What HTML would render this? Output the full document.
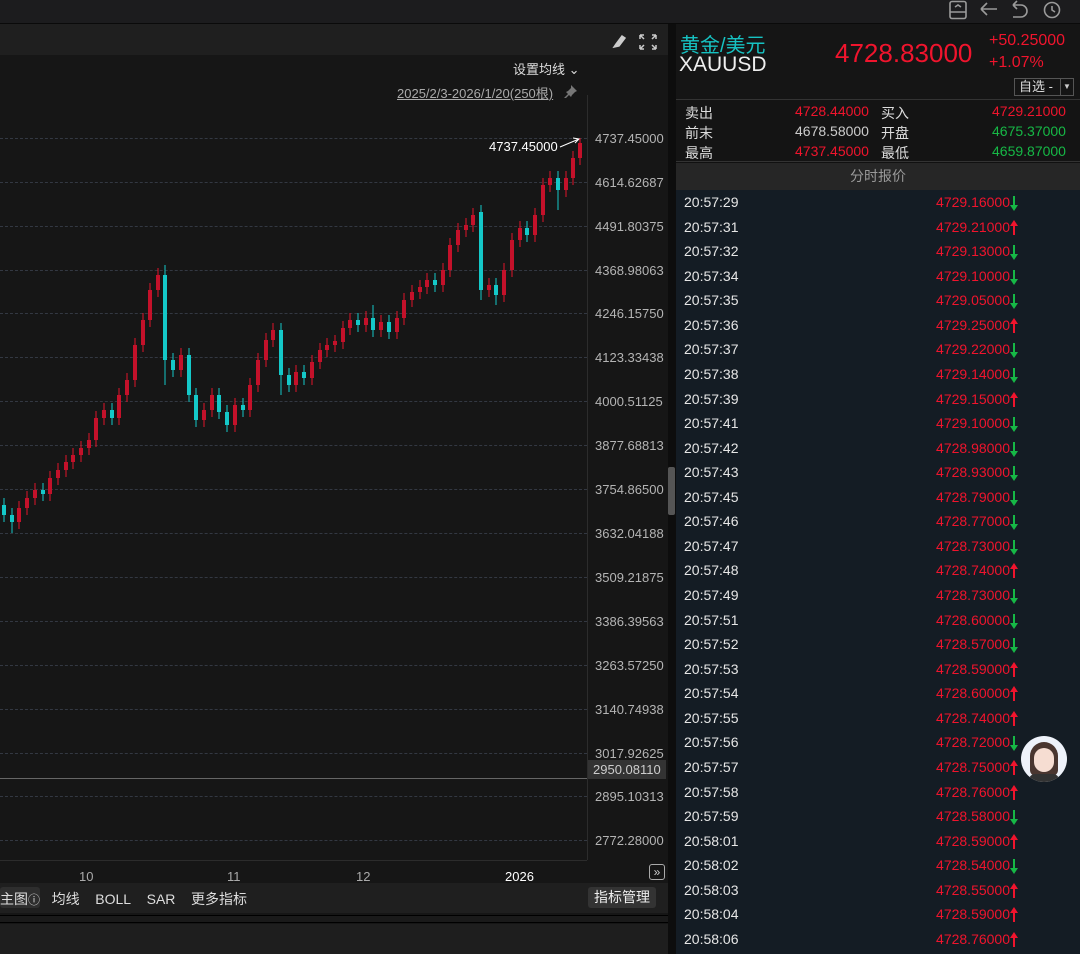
<!DOCTYPE html>
<html><head><meta charset="utf-8">
<style>
*{margin:0;padding:0;box-sizing:border-box}
body{width:1080px;height:954px;background:#161616;font-family:"Liberation Sans","Noto Sans CJK SC",sans-serif;position:relative;overflow:hidden;color:#ddd}
.abs{position:absolute}
.topbar{left:0;top:0;width:1080px;height:24px;background:#1c1c1e;border-bottom:1px solid #0a0a0a}
.chdr{left:0;top:24px;width:668px;height:31px;background:#1f1f1f}
.ylab{left:595px;font-size:13px;color:#b4b4b4}
.grid{left:0;width:587px;height:0;border-top:1px dashed #333842}
.xl{top:869px;font-size:13px;color:#aaa}
.right{left:676px;top:24px;width:404px;height:930px;background:#111}
#rows{position:absolute;left:676px;top:190px;width:404px}
.row{position:relative;width:404px;height:24.57px;font-size:14px}
.row .t{position:absolute;left:8px;top:4px;color:#e6e6e6}
.row .p{position:absolute;right:70px;top:4px;color:#f0142d}
.row i{position:absolute;left:334px;top:5px;width:8px;height:16px}
.u{background:linear-gradient(#f0142d,#f0142d) 3px 5px/2px 10px no-repeat}
.u:before{content:"";position:absolute;left:0;top:0;border-left:4px solid transparent;border-right:4px solid transparent;border-bottom:6px solid #f0142d}
.d{background:linear-gradient(#16b846,#16b846) 3px 1px/2px 10px no-repeat}
.d:before{content:"";position:absolute;left:0;top:10px;border-left:4px solid transparent;border-right:4px solid transparent;border-top:6px solid #16b846}
.st{position:absolute;font-size:14px}
</style></head><body>
<div class="abs topbar"></div>
<svg class="abs" style="left:945px;top:0" width="135" height="22" viewBox="0 0 135 22" fill="none" stroke="#9a9a9a" stroke-width="1.6">
<rect x="5" y="1.5" width="16" height="17" rx="2"/><path d="M5 12h16M10 7l3-2 3 2"/>
<path d="M36 9h16M36 9l6-6M36 9l6 6"/>
<path d="M68 5h8a6 6 0 010 12h-8M68 5l4-4M68 5l4 4"/>
<circle cx="107" cy="10" r="7.5"/><path d="M107 6v4l3 2"/>
</svg>
<div class="abs chdr"></div>
<svg class="abs" style="left:612px;top:33px" width="48" height="18" fill="none" stroke="#ccc" stroke-width="1.5">
<path d="M2 14l5-1 6-8-3-2-6 8z" fill="#ccc"/>
<path d="M28 2h4M28 2v4M28 2l4 4M44 2h-4M44 2v4M44 2l-4 4M28 16h4M28 16v-4M28 16l4-4M44 16h-4M44 16v-4M44 16l-4-4"/>
</svg>
<div class="abs" style="left:513px;top:59px;font-size:13px;color:#ddd">设置均线 ⌄</div>
<div class="abs" style="left:397px;top:83px;font-size:13px;color:#aaa;text-decoration:underline">2025/2/3-2026/1/20(250根)</div>
<svg class="abs" style="left:562px;top:84px" width="16" height="14" fill="#777"><path d="M9 1l6 6-2 1-3 3-1 2-2-2-5 5-1-1 5-5-2-2 2-1 3-3z"/></svg>
<div class="abs" style="left:587px;top:95px;width:1px;height:765px;background:#2c2c2c"></div>
<div class="abs" style="left:0;top:860px;width:587px;height:1px;background:#2c2c2c"></div>
<div class="abs grid" style="top:138px"></div><div class="abs grid" style="top:182px"></div><div class="abs grid" style="top:226px"></div><div class="abs grid" style="top:270px"></div><div class="abs grid" style="top:313px"></div><div class="abs grid" style="top:357px"></div><div class="abs grid" style="top:401px"></div><div class="abs grid" style="top:445px"></div><div class="abs grid" style="top:489px"></div><div class="abs grid" style="top:533px"></div><div class="abs grid" style="top:577px"></div><div class="abs grid" style="top:621px"></div><div class="abs grid" style="top:665px"></div><div class="abs grid" style="top:709px"></div><div class="abs grid" style="top:753px"></div><div class="abs grid" style="top:796px"></div><div class="abs grid" style="top:840px"></div>
<div class="abs" style="left:0;top:778px;width:587px;height:1px;background:#666"></div>
<div class="abs ylab" style="top:131px">4737.45000</div>
<div class="abs ylab" style="top:175px">4614.62687</div>
<div class="abs ylab" style="top:219px">4491.80375</div>
<div class="abs ylab" style="top:263px">4368.98063</div>
<div class="abs ylab" style="top:306px">4246.15750</div>
<div class="abs ylab" style="top:350px">4123.33438</div>
<div class="abs ylab" style="top:394px">4000.51125</div>
<div class="abs ylab" style="top:438px">3877.68813</div>
<div class="abs ylab" style="top:482px">3754.86500</div>
<div class="abs ylab" style="top:526px">3632.04188</div>
<div class="abs ylab" style="top:570px">3509.21875</div>
<div class="abs ylab" style="top:614px">3386.39563</div>
<div class="abs ylab" style="top:658px">3263.57250</div>
<div class="abs ylab" style="top:702px">3140.74938</div>
<div class="abs ylab" style="top:746px">3017.92625</div>
<div class="abs" style="left:588px;top:760px;width:78px;height:19px;background:#333"></div>
<div class="abs ylab" style="left:593px;top:762px;color:#ccc">2950.08110</div>
<div class="abs ylab" style="top:789px">2895.10313</div>
<div class="abs ylab" style="top:833px">2772.28000</div>
<div class="abs" style="left:489px;top:139px;font-size:13px;color:#fff">4737.45000</div>
<svg class="abs" style="left:558px;top:135px" width="24" height="14" fill="none" stroke="#fff" stroke-width="1"><path d="M2 12L21 4M15 3l6 1-4 4"/></svg>
<svg class="abs" style="left:0;top:0" width="587" height="860" fill="none">
<path stroke="#e0142b" stroke-width="1" d="M19 501V529M27 491V515M35 483V505M50 471V501M58 463V485M66 455V477M73 448V469M81 441V462M89 433V455M96 411V447M104 403V425M119 388V425M127 373V402M135 338V387M143 313V352M150 283V327M158 268V297M181 348V377M204 403V427M212 388V417M235 398V432M250 378V417M258 353V392M266 333V367M273 323V347M296 365V392M312 355V385M320 343V369M327 338V357M335 335V352M343 321V349M350 313V335M366 311V332M381 315V337M397 311V339M404 293V325M412 285V307M420 280V299M427 273V294M443 263V292M450 238V277M458 223V252M466 218V237M473 208V232M489 278V297M504 263V302M512 233V277M520 221V247M535 208V242M543 178V222M550 171V192M566 171V197M573 151V185M580 138V165"/>
<path stroke="#c4112a" stroke-width="4" d="M19 508V522M27 498V508M35 490V498M50 478V494M58 470V478M66 462V470M73 455V462M81 448V455M89 440V448M96 418V440M104 410V418M119 395V418M127 380V395M135 345V380M143 320V345M150 290V320M158 275V290M181 355V370M204 410V420M212 395V410M235 405V425M250 385V410M258 360V385M266 340V360M273 330V340M296 372V385M312 362V378M320 350V362M327 345V350M335 341V345M343 328V342M350 320V328M366 318V325M381 322V330M397 318V332M404 300V318M412 292V300M420 287V292M427 280V287M443 270V285M450 245V270M458 230V245M466 225V230M473 215V225M489 285V290M504 270V295M512 240V270M520 228V240M535 215V235M543 185V215M550 178V185M566 178V190M573 158V178M580 143V158"/>
<path stroke="#14c8c8" stroke-width="1" d="M4 498V522M12 508V533M43 483V501M112 403V425M165 265V385M173 353V377M189 348V402M196 388V427M219 388V419M227 405V432M243 398V417M281 323V395M289 368V392M304 365V385M358 313V332M373 305V337M389 315V339M435 273V292M481 205V300M496 278V305M527 221V242M558 171V210"/>
<path stroke="#14c8c8" stroke-width="4" d="M4 505V515M12 515V522M43 490V494M112 410V418M165 275V360M173 360V370M189 355V395M196 395V420M219 395V412M227 412V425M243 405V410M281 330V375M289 375V385M304 372V378M358 320V325M373 318V330M389 322V332M435 280V285M481 212V290M496 285V295M527 228V235M558 178V190"/>
</svg>
<div class="abs xl" style="left:79px">10</div>
<div class="abs xl" style="left:227px">11</div>
<div class="abs xl" style="left:356px">12</div>
<div class="abs xl" style="left:505px;color:#fff">2026</div>
<div class="abs" style="left:649px;top:864px;width:16px;height:16px;border:1px solid #aaa;border-radius:3px;font-size:12px;color:#ccc;text-align:center;line-height:14px">»</div>
<div class="abs" style="left:0;top:883px;width:668px;height:30px;background:#1f1f1f"></div>
<div class="abs" style="left:0;top:887px;width:40px;height:21px;background:#2e2e2e;border-radius:3px"></div>
<div class="abs" style="left:0;top:889px;font-size:14px;color:#ddd;white-space:nowrap">主图<span style="font-size:12px">ⓘ</span>&nbsp;&nbsp;&nbsp;均线&nbsp;&nbsp;&nbsp;&nbsp;BOLL&nbsp;&nbsp;&nbsp;&nbsp;SAR&nbsp;&nbsp;&nbsp;&nbsp;更多指标</div>
<div class="abs" style="left:588px;top:887px;width:68px;height:21px;background:#333;border-radius:3px;font-size:14px;color:#eee;text-align:center;line-height:21px">指标管理</div>
<div class="abs" style="left:0;top:915px;width:668px;height:8px;border-top:1px solid #000;border-bottom:1px solid #000;background:#1a1a1a"></div>
<div class="abs" style="left:0;top:924px;width:668px;height:30px;background:#1e1e1e"></div>
<div class="abs" style="left:668px;top:24px;width:8px;height:930px;background:#0d0d0d"></div>
<div class="abs" style="left:668px;top:467px;width:7px;height:48px;background:#555;border-radius:2px"></div>
<div class="abs right"></div>
<div class="abs" style="left:676px;top:24px;width:404px;height:76px;background:#151515;border-bottom:1px solid #333"></div>
<div class="abs" style="left:680px;top:29px;font-size:20px;color:#16c2c2">黄金/美元</div>
<div class="abs" style="left:679px;top:53px;font-size:21px;color:#eee">XAUUSD</div>
<div class="abs" style="left:835px;top:38px;font-size:26px;color:#f0142d">4728.83000</div>
<div class="abs" style="left:989px;top:32px;font-size:16px;color:#f0142d">+50.25000</div>
<div class="abs" style="left:989px;top:54px;font-size:16px;color:#f0142d">+1.07%</div>
<div class="abs" style="left:1014px;top:78px;width:60px;height:18px;border:1px solid #555;font-size:13px;color:#ddd;padding-left:4px;line-height:16px">自选 -</div>
<div class="abs" style="left:1060px;top:79px;width:13px;height:16px;border-left:1px solid #555;font-size:8px;color:#ccc;text-align:center;line-height:16px">▼</div>
<div class="abs" style="left:676px;top:100px;width:404px;height:62px;background:#141414;border-bottom:1px solid #333"></div>
<div class="st" style="left:685px;top:103px;color:#ddd">卖出</div><div class="st" style="left:795px;top:103px;color:#f0142d">4728.44000</div><div class="st" style="left:881px;top:103px;color:#ddd">买入</div><div class="st" style="left:992px;top:103px;color:#f0142d">4729.21000</div>
<div class="st" style="left:685px;top:123px;color:#ddd">前末</div><div class="st" style="left:795px;top:123px;color:#ccc">4678.58000</div><div class="st" style="left:881px;top:123px;color:#ddd">开盘</div><div class="st" style="left:992px;top:123px;color:#16b846">4675.37000</div>
<div class="st" style="left:685px;top:143px;color:#ddd">最高</div><div class="st" style="left:795px;top:143px;color:#f0142d">4737.45000</div><div class="st" style="left:881px;top:143px;color:#ddd">最低</div><div class="st" style="left:992px;top:143px;color:#16b846">4659.87000</div>
<div class="abs" style="left:676px;top:163px;width:404px;height:27px;background:#262626;font-size:14px;color:#999;text-align:center;line-height:27px">分时报价</div>
<div class="abs" style="left:676px;top:190px;width:404px;height:764px;background:#141c24"></div>
<div id="rows">
<div class="row"><span class="t">20:57:29</span><span class="p">4729.16000</span><i class="d"></i></div>
<div class="row"><span class="t">20:57:31</span><span class="p">4729.21000</span><i class="u"></i></div>
<div class="row"><span class="t">20:57:32</span><span class="p">4729.13000</span><i class="d"></i></div>
<div class="row"><span class="t">20:57:34</span><span class="p">4729.10000</span><i class="d"></i></div>
<div class="row"><span class="t">20:57:35</span><span class="p">4729.05000</span><i class="d"></i></div>
<div class="row"><span class="t">20:57:36</span><span class="p">4729.25000</span><i class="u"></i></div>
<div class="row"><span class="t">20:57:37</span><span class="p">4729.22000</span><i class="d"></i></div>
<div class="row"><span class="t">20:57:38</span><span class="p">4729.14000</span><i class="d"></i></div>
<div class="row"><span class="t">20:57:39</span><span class="p">4729.15000</span><i class="u"></i></div>
<div class="row"><span class="t">20:57:41</span><span class="p">4729.10000</span><i class="d"></i></div>
<div class="row"><span class="t">20:57:42</span><span class="p">4728.98000</span><i class="d"></i></div>
<div class="row"><span class="t">20:57:43</span><span class="p">4728.93000</span><i class="d"></i></div>
<div class="row"><span class="t">20:57:45</span><span class="p">4728.79000</span><i class="d"></i></div>
<div class="row"><span class="t">20:57:46</span><span class="p">4728.77000</span><i class="d"></i></div>
<div class="row"><span class="t">20:57:47</span><span class="p">4728.73000</span><i class="d"></i></div>
<div class="row"><span class="t">20:57:48</span><span class="p">4728.74000</span><i class="u"></i></div>
<div class="row"><span class="t">20:57:49</span><span class="p">4728.73000</span><i class="d"></i></div>
<div class="row"><span class="t">20:57:51</span><span class="p">4728.60000</span><i class="d"></i></div>
<div class="row"><span class="t">20:57:52</span><span class="p">4728.57000</span><i class="d"></i></div>
<div class="row"><span class="t">20:57:53</span><span class="p">4728.59000</span><i class="u"></i></div>
<div class="row"><span class="t">20:57:54</span><span class="p">4728.60000</span><i class="u"></i></div>
<div class="row"><span class="t">20:57:55</span><span class="p">4728.74000</span><i class="u"></i></div>
<div class="row"><span class="t">20:57:56</span><span class="p">4728.72000</span><i class="d"></i></div>
<div class="row"><span class="t">20:57:57</span><span class="p">4728.75000</span><i class="u"></i></div>
<div class="row"><span class="t">20:57:58</span><span class="p">4728.76000</span><i class="u"></i></div>
<div class="row"><span class="t">20:57:59</span><span class="p">4728.58000</span><i class="d"></i></div>
<div class="row"><span class="t">20:58:01</span><span class="p">4728.59000</span><i class="u"></i></div>
<div class="row"><span class="t">20:58:02</span><span class="p">4728.54000</span><i class="d"></i></div>
<div class="row"><span class="t">20:58:03</span><span class="p">4728.55000</span><i class="u"></i></div>
<div class="row"><span class="t">20:58:04</span><span class="p">4728.59000</span><i class="u"></i></div>
<div class="row"><span class="t">20:58:06</span><span class="p">4728.76000</span><i class="u"></i></div>
</div>
<div class="abs" style="left:1021px;top:736px;width:46px;height:46px;border-radius:50%;background:#eef2fa;overflow:hidden">
<div class="abs" style="left:9px;top:6px;width:28px;height:34px;border-radius:14px 14px 6px 6px;background:#4a3630"></div>
<div class="abs" style="left:13px;top:12px;width:20px;height:24px;border-radius:10px;background:#f6ddd2"></div>
<div class="abs" style="left:8px;top:38px;width:30px;height:12px;border-radius:8px;background:#333"></div>
</div>
</body></html>
